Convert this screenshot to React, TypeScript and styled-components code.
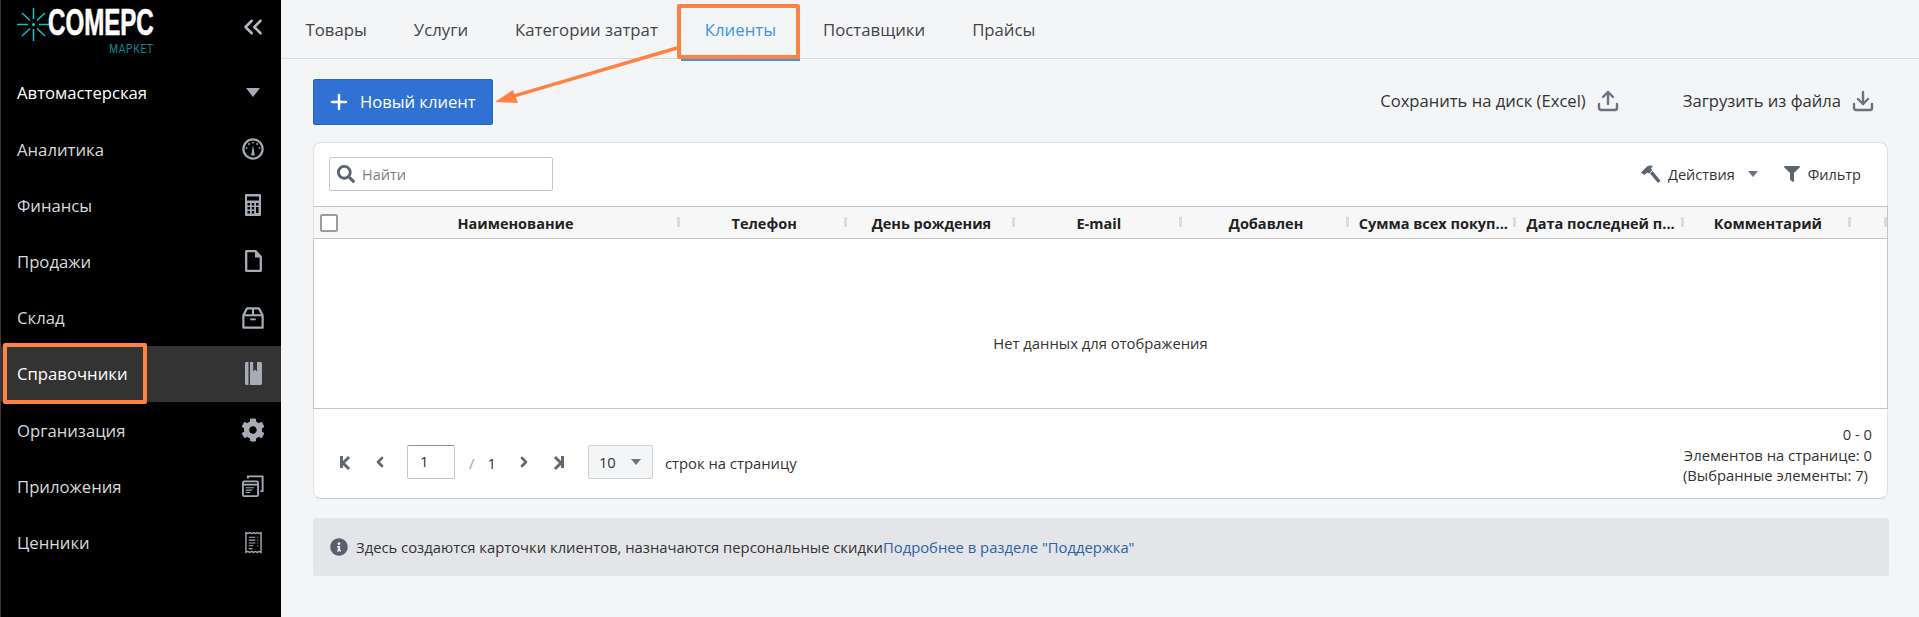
import React from 'react'
import styled, { createGlobalStyle } from 'styled-components'
import { FaCog, FaFilter, FaInfoCircle, FaSearch } from 'react-icons/fa'
import { FiChevronLeft, FiChevronRight, FiChevronsLeft, FiDownload, FiPlus, FiUpload } from 'react-icons/fi'

const GaugeIcon = () => (
  <svg width="22" height="22" viewBox="0 0 24 24" fill="none">
    <circle cx="12" cy="12" r="10.5" stroke="currentColor" strokeWidth="2.4" />
    <path d="M12 8l2 11h-4z" fill="currentColor" />
    <circle cx="12" cy="5" r="1" fill="currentColor" />
    <circle cx="7.500" cy="6.500" r="1" fill="currentColor" />
    <circle cx="16.500" cy="6.500" r="1" fill="currentColor" />
    <circle cx="5" cy="11" r="1" fill="currentColor" />
    <circle cx="19" cy="11" r="1" fill="currentColor" />
  </svg>
)

const CalculatorIcon = () => (
  <svg width="16" height="22" viewBox="0 0 16 22">
    <path
      fillRule="evenodd"
      fill="currentColor"
      d="M1 0h14a1 1 0 0 1 1 1v20a1 1 0 0 1-1 1H1a1 1 0 0 1-1-1V1a1 1 0 0 1 1-1zM2 2.500v4h12v-4zM2.500 9v2.500h2.500V9zM6.700 9v2.500h2.500V9zM11 9v2.500h2.500V9zM2.500 13v2.500h2.500V13zM6.700 13v2.500h2.500V13zM11 13v6h2.500v-6zM2.500 17v2.500h2.500V17zM6.700 17v2.500h2.500V17z"
    />
  </svg>
)

const FileIcon = () => (
  <svg width="17" height="22" viewBox="0 0 17 22" fill="none">
    <path d="M1.200 1.200h9.500l5.100 5.600v14H1.200z" stroke="currentColor" strokeWidth="2.300" strokeLinejoin="round" />
    <path d="M10 1.500v6h6.500z" fill="currentColor" />
  </svg>
)

const BoxIcon = () => (
  <svg width="22" height="22" viewBox="0 0 24 24" fill="none">
    <path d="M5.500 1.500h13l4 7.500v13.500H1.500V9z" stroke="currentColor" strokeWidth="2.400" strokeLinejoin="round" />
    <path d="M1.500 9h21M12 1.500V9" stroke="currentColor" strokeWidth="2.200" />
    <path d="M9 12.500h6v2H9z" fill="currentColor" />
  </svg>
)

const BookIcon = () => (
  <svg width="17" height="23" viewBox="0 0 17 23">
    <path d="M0 1.500C0 .7.700 0 1.500 0h2v23h-2C.7 23 0 22.300 0 21.500z" fill="currentColor" />
    <path d="M5 0h3.200v9.500l1.900-2 1.900 2V0h3.500c.8 0 1.500.7 1.500 1.500v20c0 .8-.7 1.500-1.500 1.500H5z" fill="currentColor" />
  </svg>
)

const WindowsIcon = () => (
  <svg width="22" height="22" viewBox="0 0 24 24" fill="none">
    <rect x="1" y="7" width="16.500" height="16" rx="1.500" stroke="currentColor" strokeWidth="2" />
    <path d="M1 10.500h16" stroke="currentColor" strokeWidth="2" />
    <path d="M4 14h9M4 16.500h7M4 19h5" stroke="currentColor" strokeWidth="1.100" />
    <path d="M6.500 3.800V1.500h16v16h-2.400" stroke="currentColor" strokeWidth="2" />
  </svg>
)

const ReceiptIcon = () => (
  <svg width="17" height="23" viewBox="0 0 18 23" fill="none">
    <path d="M1 1l2 1 2-1 2 1 2-1 2 1 2-1 2 1 2-1v21l-2-1-2 1-2-1-2 1-2-1-2 1-2-1-2 1z" stroke="currentColor" strokeWidth="1.500" />
    <path d="M4 6h7M13 6h1M4 9h7M13 9h1M4 12h7M13 12h1M4 15h5M13 15h1M4 18h4" stroke="currentColor" strokeWidth="1.200" />
  </svg>
)

const HammerIcon = () => (
  <svg width="19" height="19" viewBox="0 0 19 19" fill="currentColor">
    <path d="M0 7.500L6 1.500c2-1.500 4-1.500 6 0l-2 1.500 1 2.500-3 3-2-1-2.500 2.500z" />
    <path d="M9 8.500l2.500-2.500 7 8.500c.7.800.7 1.700 0 2.400s-1.600.7-2.300 0z" />
  </svg>
)

const StarBurst = () => (
  <svg width="34" height="34" viewBox="0 0 34 34" stroke="#19bcc4" strokeWidth="1.500">
    <path d="M16.500 0v11M16.500 21v12M0 16.500h11M22 16.500h12M5 5l8 7.500M28 5l-8 7.500M5 28l8-7.500M28 28l-8-7.500" />
    <circle cx="16.500" cy="16.500" r=".8" fill="#19bcc4" />
  </svg>
)

const nav = [
  { label: 'Аналитика', icon: <GaugeIcon /> },
  { label: 'Финансы', icon: <CalculatorIcon /> },
  { label: 'Продажи', icon: <FileIcon /> },
  { label: 'Склад', icon: <BoxIcon /> },
  { label: 'Справочники', icon: <BookIcon />, active: true },
  { label: 'Организация', icon: <FaCog size={24} /> },
  { label: 'Приложения', icon: <WindowsIcon /> },
  { label: 'Ценники', icon: <ReceiptIcon /> },
]

const tabs = ['Товары', 'Услуги', 'Категории затрат', 'Клиенты', 'Поставщики', 'Прайсы']
const columns = ['Наименование', 'Телефон', 'День рождения', 'E-mail', 'Добавлен', 'Сумма всех покуп...', 'Дата последней п...', 'Комментарий']

export default function App() {
  return (
    <Page>
      <GlobalStyle />
      <Sidebar>
        <LogoRow>
          <Logo>
            <StarBurst />
            <LogoText>
              <LogoName>COMEPC</LogoName>
              <LogoSub>МАРКЕТ</LogoSub>
            </LogoText>
          </Logo>
          <Collapse><FiChevronsLeft size={30} strokeWidth={2} /></Collapse>
        </LogoRow>
        <ShopRow>
          <span>Автомастерская</span>
          <ShopCaret />
        </ShopRow>
        {nav.map((item) => (
          <NavRow key={item.label} $active={item.active}>
            <span>{item.label}</span>
            <NavIcon>{item.icon}</NavIcon>
          </NavRow>
        ))}
      </Sidebar>

      <Main>
        <TabBar>
          {tabs.map((tab) => (
            <Tab key={tab} $active={tab === 'Клиенты'}>{tab}</Tab>
          ))}
        </TabBar>

        <Content>
          <ActionRow>
            <PrimaryButton><FiPlus size={24} strokeWidth={2.5} />Новый клиент</PrimaryButton>
            <FileActions>
              <FileAction>Сохранить на диск (Excel)<FiUpload size={24} strokeWidth={2.400} /></FileAction>
              <FileAction>Загрузить из файла<FiDownload size={24} strokeWidth={2.400} /></FileAction>
            </FileActions>
          </ActionRow>

          <Card>
            <CardToolbar>
              <SearchBox>
                <FaSearch size={18} />
                <span>Найти</span>
              </SearchBox>
              <ToolGroup>
                <Tool><HammerIcon />Действия<SmallCaret /></Tool>
                <Tool><FaFilter size={16} />Фильтр</Tool>
              </ToolGroup>
            </CardToolbar>

            <HeaderRow>
              <CheckCell><CheckBox /></CheckCell>
              {columns.map((col) => (
                <HeadCell key={col}><HeadText>{col}</HeadText></HeadCell>
              ))}
              <HeadCell />
            </HeaderRow>
            <EmptyBody>Нет данных для отображения</EmptyBody>

            <Pager>
              <PagerLeft>
                <PagerBtn><EdgeMark $first /></PagerBtn>
                <PagerBtn><FiChevronLeft size={16} strokeWidth={4} /></PagerBtn>
                <PageInput>1</PageInput>
                <Slash>/</Slash>
                <PageTotal>1</PageTotal>
                <PagerBtn $ml={11}><FiChevronRight size={16} strokeWidth={4} /></PagerBtn>
                <PagerBtn><EdgeMark /></PagerBtn>
                <PageSize>10<SmallCaret /></PageSize>
                <RowsLabel>строк на страницу</RowsLabel>
              </PagerLeft>
              <PagerInfo>
                <div>0 - 0</div>
                <div>Элементов на странице: 0</div>
                <PagerSelected>(Выбранные элементы: 7)</PagerSelected>
              </PagerInfo>
            </Pager>
          </Card>

          <Notice>
            <FaInfoCircle size={18} />
            <span>Здесь создаются карточки клиентов, назначаются персональные скидки<NoticeLink>Подробнее в разделе "Поддержка"</NoticeLink></span>
          </Notice>
        </Content>
      </Main>

      <ClientsMark />
      <DirectoryMark />
      <Arrow width="200" height="70" viewBox="0 0 200 70">
        <path d="M192 5L22 55" stroke="#ff8243" strokeWidth="3.500" fill="none" />
        <path d="M10 59L28 47l5 13z" fill="#ff8243" />
      </Arrow>
    </Page>
  )
}

const GlobalStyle = createGlobalStyle`
  html, body {
    margin: 0;
    padding: 0;
    background: #f4f5f7;
  }
  * {
    box-sizing: border-box;
  }
`

const Page = styled.div`
  position: relative;
  display: flex;
  width: 1919px;
  height: 617px;
  overflow: hidden;
  font-family: "Open Sans", "Noto Sans", sans-serif;
  color: #222;
`

const Sidebar = styled.aside`
  flex: 0 0 281px;
  background: #000;
  border-left: 1px solid #3a3a3a;
  color: #d8dade;
`

const LogoRow = styled.div`
  display: flex;
  align-items: flex-start;
  justify-content: space-between;
  height: 64px;
  padding: 7px 16px 0 16px;
`

const Logo = styled.div`
  display: flex;
  align-items: flex-start;
  margin-top: 1px;
`

const LogoText = styled.div`
  display: flex;
  flex-direction: column;
  align-items: flex-end;
  margin-left: -3px;
  width: 107px;
`

const LogoName = styled.div`
  font-family: "Liberation Sans", sans-serif;
  font-weight: 700;
  font-size: 33px;
  line-height: 28px;
  color: #fff;
  width: 107px;
  white-space: nowrap;
  transform: scale(0.73, 1.12);
  transform-origin: left center;
  margin-top: 1px;
  -webkit-text-stroke: 0.6px #fff;
`

const LogoSub = styled.div`
  font-family: "Roboto", sans-serif;
  font-size: 12.500px;
  line-height: 13px;
  margin-top: 5px;
  margin-right: 1px;
  letter-spacing: 1px;
  color: #0f8d95;
  transform: scaleX(0.8);
  transform-origin: right center;
`

const Collapse = styled.div`
  color: #b4b8bf;
  margin-top: 5px;
  margin-right: -3px;
`

const ShopRow = styled.div`
  display: flex;
  align-items: center;
  justify-content: space-between;
  height: 57px;
  padding: 0 21px 0 16px;
  color: #fff;
  font-size: 16.700px;
`

const ShopCaret = styled.i`
  width: 0;
  height: 0;
  border-left: 7px solid transparent;
  border-right: 7px solid transparent;
  border-top: 9px solid #a6abb5;
`

const NavRow = styled.div<{ $active?: boolean }>`
  display: flex;
  align-items: center;
  justify-content: space-between;
  height: 56.200px;
  padding: 0 16px;
  font-size: 16.700px;
  background: ${(p) => (p.$active ? '#333' : 'transparent')};
  color: ${(p) => (p.$active ? '#fff' : '#d8dade')};
`

const NavIcon = styled.div`
  display: flex;
  align-items: center;
  justify-content: center;
  width: 24px;
  color: #a6abb5;
`

const Main = styled.main`
  flex: 1;
  min-width: 0;
`

const TabBar = styled.nav`
  display: flex;
  height: 59px;
  padding-left: 1px;
  border-bottom: 1px solid #d9dbdf;
`

const Tab = styled.div<{ $active?: boolean }>`
  display: flex;
  align-items: center;
  height: 61px;
  padding: 0 23.500px;
  font-size: 16.750px;
  color: ${(p) => (p.$active ? '#3f97dd' : '#444')};
  border-bottom: 3px solid ${(p) => (p.$active ? '#3f97dd' : 'transparent')};
`

const Content = styled.div`
  padding: 20px 31px 0 32px;
`

const ActionRow = styled.div`
  display: flex;
  align-items: center;
  justify-content: space-between;
  height: 45px;
`

const PrimaryButton = styled.button`
  display: flex;
  align-items: center;
  gap: 9px;
  width: 180px;
  height: 46px;
  padding: 0 0 0 13px;
  border: 1px solid #2a66b8;
  border-radius: 2px;
  background: #2f72d3;
  color: #fff;
  font: inherit;
  font-size: 16.600px;
`

const FileActions = styled.div`
  display: flex;
  gap: 63px;
  padding: 0 13px 2px 0;
`

const FileAction = styled.div`
  display: flex;
  align-items: center;
  gap: 10px;
  font-size: 16.600px;
  color: #333;
  svg {
    color: #6b7280;
  }
`

const Card = styled.section`
  margin-top: 18px;
  height: 357px;
  background: #fff;
  border: 1px solid #e0e1e4;
  border-bottom-color: #c9cacc;
  border-radius: 8px;
`

const CardToolbar = styled.div`
  display: flex;
  align-items: center;
  justify-content: space-between;
  height: 63px;
  padding: 0 26px 1px 15px;
`

const SearchBox = styled.div`
  display: flex;
  align-items: center;
  gap: 7px;
  width: 224px;
  height: 34px;
  padding: 0 7px;
  border: 1px solid #c4c6c9;
  border-radius: 2px;
  font-size: 14.500px;
  color: #7a808a;
  svg {
    color: #5b6472;
  }
`

const ToolGroup = styled.div`
  display: flex;
  gap: 26px;
`

const Tool = styled.div`
  display: flex;
  align-items: center;
  gap: 8px;
  font-size: 14.500px;
  color: #333;
  svg {
    color: #5b6472;
  }
`

const SmallCaret = styled.i`
  width: 0;
  height: 0;
  margin-left: 5px;
  border-left: 5px solid transparent;
  border-right: 5px solid transparent;
  border-top: 6px solid #6b7280;
`

const HeaderRow = styled.div`
  display: grid;
  grid-template-columns: 36px 330px repeat(7, 167.300px) 36px;
  height: 33px;
  background: #f7f7f7;
  border-top: 1px solid #c4c4c4;
  border-bottom: 1px solid #c4c4c4;
  border-right: 1px solid #c4c4c4;
  margin-right: -1px;
`

const CheckCell = styled.div`
  display: flex;
  align-items: center;
  padding-left: 6px;
`

const CheckBox = styled.div`
  width: 18px;
  height: 18px;
  background: #fff;
  border: 2px solid #9c9c9c;
  border-radius: 2px;
`

const HeadCell = styled.div`
  position: relative;
  display: flex;
  align-items: center;
  justify-content: center;
  padding: 2px 6px 0 7px;
  &::after {
    content: '';
    position: absolute;
    right: 0;
    top: 10px;
    width: 3px;
    height: 10px;
    background: #dcdcdc;
  }
`

const HeadText = styled.span`
  font-size: 14.500px;
  font-weight: 700;
  color: #222;
  white-space: nowrap;
`

const EmptyBody = styled.div`
  display: flex;
  align-items: center;
  justify-content: center;
  height: 170px;
  padding-top: 38px;
  font-size: 14.800px;
  color: #333;
  border-bottom: 1px solid #c4c4c4;
  border-left: 1px solid #c4c4c4;
  border-right: 1px solid #c4c4c4;
  margin: 0 -1px;
`

const Pager = styled.div`
  display: flex;
  justify-content: space-between;
  padding: 15px 15px 0 13px;
`

const PagerLeft = styled.div`
  display: flex;
  align-items: center;
  height: 34px;
  margin-top: 21px;
  font-size: 14.800px;
  color: #333;
`

const PagerBtn = styled.div<{ $ml?: number }>`
  display: flex;
  align-items: center;
  justify-content: center;
  width: 35px;
  margin-left: ${(p) => p.$ml ?? 0}px;
  color: #5f6875;
`

const EdgeMark = styled.span<{ $first?: boolean }>`
  position: relative;
  display: inline-block;
  width: 10px;
  height: 12px;
  &::before {
    content: '';
    position: absolute;
    top: 0;
    bottom: 0;
    ${(p) => (p.$first ? 'left: 0;' : 'right: 0;')}
    width: 3px;
    background: #5f6875;
  }
  &::after {
    content: '';
    position: absolute;
    top: 2px;
    width: 7px;
    height: 7px;
    border-left: 3px solid #5f6875;
    border-bottom: 3px solid #5f6875;
    ${(p) => (p.$first ? 'left: 3px; transform: rotate(45deg);' : 'right: 3px; transform: rotate(225deg);')}
  }
`

const PageInput = styled.div`
  width: 48px;
  height: 34px;
  margin-left: 10px;
  padding: 5px 0 0 12px;
  border: 1px solid #c4c6c9;
  border-top-color: #8f9296;
  border-radius: 2px;
`

const Slash = styled.span`
  margin: 2px 0 0 14px;
  color: #9aa0a8;
`

const PageTotal = styled.span`
  margin: 2px 0 0 13px;
`

const PageSize = styled.div`
  display: flex;
  align-items: center;
  gap: 10px;
  width: 65px;
  height: 34px;
  margin-left: 11px;
  padding: 0 10px;
  background: #f4f5f7;
  border: 1px solid #cfd1d4;
  border-radius: 2px;
`

const RowsLabel = styled.span`
  margin: 2px 0 0 12px;
`

const PagerInfo = styled.div`
  font-size: 14.800px;
  line-height: 20.500px;
  text-align: right;
  color: #333;
`

const PagerSelected = styled.div`
  padding-right: 4px;
`

const Notice = styled.div`
  display: flex;
  align-items: center;
  gap: 8px;
  height: 58px;
  margin-top: 19px;
  padding-left: 17px;
  margin-right: -1px;
  background: #e3e5e9;
  border-radius: 3px;
  font-size: 14.800px;
  color: #333;
  svg {
    color: #58606e;
  }
`

const NoticeLink = styled.span`
  color: #2d62a3;
`

const ClientsMark = styled.div`
  position: absolute;
  left: 677px;
  top: 4px;
  width: 123px;
  height: 55px;
  border: 4px solid #ff8243;
  border-radius: 2px;
`

const DirectoryMark = styled.div`
  position: absolute;
  left: 3px;
  top: 343px;
  width: 144px;
  height: 61px;
  border: 4px solid #ff8243;
  border-radius: 2px;
`

const Arrow = styled.svg`
  position: absolute;
  left: 485px;
  top: 43px;
`
